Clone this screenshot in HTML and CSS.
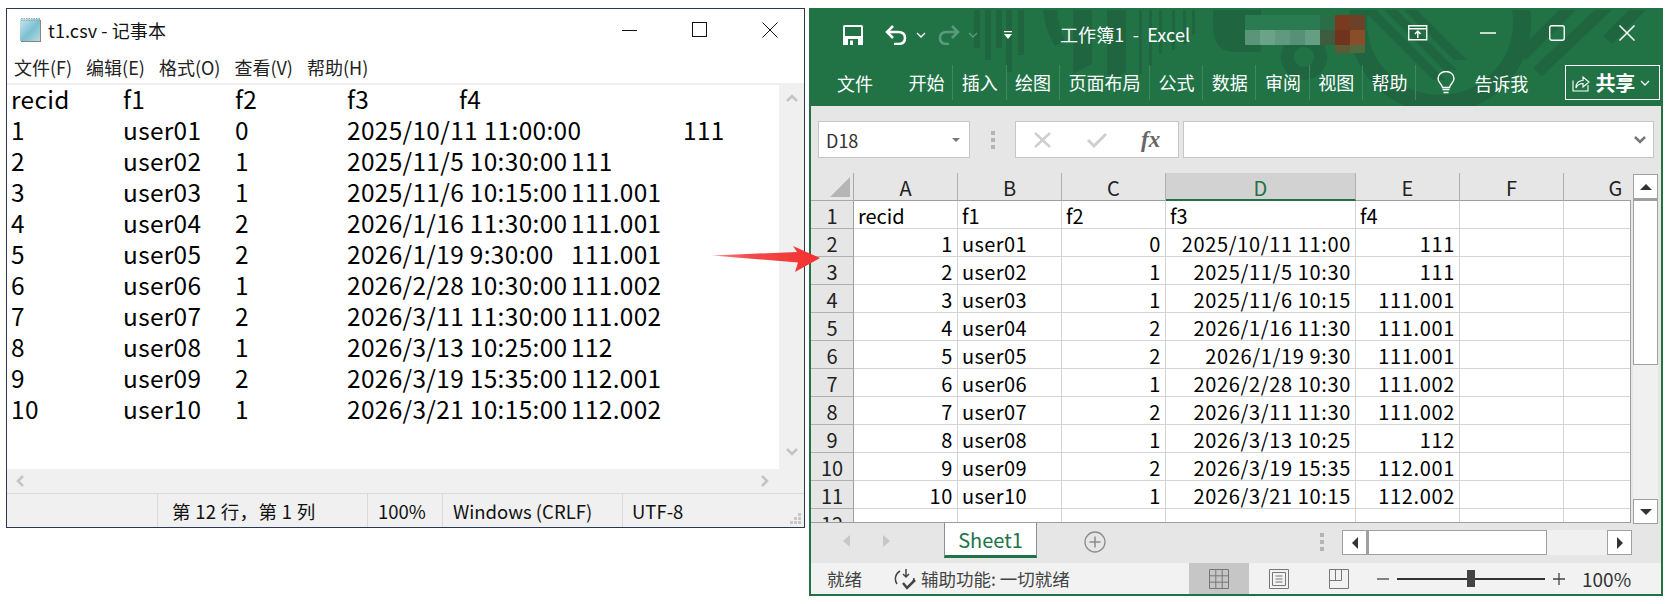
FILE: index.html
```html
<!DOCTYPE html>
<html lang="zh">
<head>
<meta charset="utf-8">
<title>t1.csv</title>
<link rel="stylesheet" href="styles.css">
</head>
<body>
<div class="stage">
  <section class="np">
    <header class="np-title">
      <svg class="np-icon" width="26" height="26" viewBox="0 0 26 26"><rect x="3" y="3" width="20" height="22" fill="#8a8672"/><rect x="2" y="2" width="20" height="22" fill="#7fc4d8"/><rect x="2" y="2" width="20" height="22" fill="url(#npg)"/><defs><linearGradient id="npg" x1="0" y1="0" x2="1" y2="1"><stop offset="0" stop-color="#c9e8f0"/><stop offset=".55" stop-color="#7cbfd3"/><stop offset="1" stop-color="#b5dbe5"/></linearGradient></defs><path d="M3 1.500h19M3 3.500h19" stroke="#9aa5aa" stroke-dasharray="1.500 1"/></svg>
      <span class="np-name">t1.csv - 记事本</span>
      <div class="np-ctrls">
        <svg width="16" height="16" viewBox="0 0 16 16"><path d="M0 8.500h15" stroke="#111"/></svg>
        <svg width="16" height="16" viewBox="0 0 16 16"><rect x=".5" y=".5" width="14" height="14" fill="none" stroke="#111"/></svg>
        <svg width="16" height="16" viewBox="0 0 16 16"><path d="M.5.500l15 15M15.500.500l-15 15" stroke="#111" fill="none"/></svg>
      </div>
    </header>
    <nav class="np-menu"><span>文件(F)</span><span>编辑(E)</span><span>格式(O)</span><span>查看(V)</span><span>帮助(H)</span></nav>
    <div class="np-main">
      <pre class="np-text">recid	f1	f2	f3	f4
1	user01	0	2025/10/11 11:00:00	111
2	user02	1	2025/11/5 10:30:00	111
3	user03	1	2025/11/6 10:15:00	111.001
4	user04	2	2026/1/16 11:30:00	111.001
5	user05	2	2026/1/19 9:30:00	111.001
6	user06	1	2026/2/28 10:30:00	111.002
7	user07	2	2026/3/11 11:30:00	111.002
8	user08	1	2026/3/13 10:25:00	112
9	user09	2	2026/3/19 15:35:00	112.001
10	user10	1	2026/3/21 10:15:00	112.002</pre>
      <div class="np-vbar">
        <svg width="12" height="8" viewBox="0 0 12 8"><path d="M1 7l5-5 5 5" fill="none" stroke="#c4c4c4" stroke-width="2.500"/></svg>
        <svg width="12" height="8" viewBox="0 0 12 8"><path d="M1 1l5 5 5-5" fill="none" stroke="#c4c4c4" stroke-width="2.500"/></svg>
      </div>
    </div>
    <div class="np-hbar">
      <svg width="8" height="12" viewBox="0 0 8 12"><path d="M7 1L2 6l5 5" fill="none" stroke="#c4c4c4" stroke-width="2.500"/></svg>
      <svg width="8" height="12" viewBox="0 0 8 12"><path d="M1 1l5 5-5 5" fill="none" stroke="#c4c4c4" stroke-width="2.500"/></svg>
    </div>
    <footer class="np-status">
      <span class="s-blank"></span>
      <span class="s-pos">第 12 行，第 1 列</span>
      <span class="s-zoom">100%</span>
      <span class="s-eol">Windows (CRLF)</span>
      <span class="s-enc">UTF-8</span>
      <svg class="s-grip" width="12" height="12" viewBox="0 0 12 12"><path d="M8 0h3v3H8zM4 4h3v3H4zM8 4h3v3H8zM0 8h3v3H0zM4 8h3v3H4zM8 8h3v3H8z" fill="#c8c8c8"/></svg>
    </footer>
  </section>

  <section class="xl">
    <svg class="xl-art" width="850" height="96" viewBox="0 2 850 96">
      <g fill="#1f6540">
        <path d="M163 2h6v38h-6zM174 2h6v50h-6zM185 2h6v38h-6zM195 2h6v62h-6zM207 2h6v45h-6zM232 2h14q2 20 8 30l-10 6q-10-16-12-36zM262 2h19v54l-19 10zM296 2h19v62l-10 6-9-4zM328 2h3v64h-3zM338 2h3v56h-3zM348 2h3v44h-3zM361 2h3v40h-3zM372 2h3v34h-3zM381 2h3v24h-3z"/>
        <path d="M402 2h48v42h-26q-22 0-22-26z"/>
        <path d="M493 26a23 23 0 1 0 .1 0zm0 13a10 10 0 1 1-.1 0z" fill-rule="evenodd"/>
        <path d="M565 2l70 70h-13l-70-70zM586 2l60 60h-13l-60-60zM606 2l50 50h-13l-50-50zM748 2h17l-50 50-9-8zM784 2h17l-70 66-9-8zM818 2h17l-34 34-9-8z"/>
      </g>
      <circle cx="629" cy="14" r="82" fill="none" stroke="#1f6540" stroke-width="18"/>
    </svg>
    <svg class="xl-blur" width="120" height="45" viewBox="0 0 120 45" shape-rendering="crispEdges">
      <rect x="0" y="0" width="75" height="15" fill="#2a7a52"/><rect x="75" y="0" width="15" height="15" fill="#2a6e48"/><rect x="90" y="0" width="15" height="15" fill="#7a3a20"/><rect x="105" y="0" width="15" height="15" fill="#6d4028"/>
      <rect x="0" y="15" width="15" height="15" fill="#5b9579"/><rect x="15" y="15" width="15" height="15" fill="#6aa387"/><rect x="30" y="15" width="15" height="15" fill="#5f9a7e"/><rect x="45" y="15" width="15" height="15" fill="#569077"/><rect x="60" y="15" width="15" height="15" fill="#659e83"/><rect x="75" y="15" width="15" height="15" fill="#3f5d3e"/><rect x="90" y="15" width="15" height="15" fill="#70331c"/><rect x="105" y="15" width="15" height="15" fill="#8a4d2a"/>
      <rect x="90" y="30" width="15" height="8" fill="#5d5a35"/><rect x="105" y="30" width="15" height="8" fill="#4f6a3c"/>
    </svg>
    <header class="xl-title">
      <div class="qat">
        <svg class="q-save" width="20" height="20" viewBox="0 0 20 20"><path d="M0 1.500Q0 0 1.500 0h17Q20 0 20 1.500V20H0z" fill="#fff"/><path d="M2 2h16v9H2z" fill="#217346"/><path d="M5 14h10v6H5z" fill="#217346"/><path d="M7 15.500h3V20H7z" fill="#fff"/></svg>
        <svg class="q-undo" width="22" height="20" viewBox="0 0 22 20"><path d="M8 1L2 7l6 6M2 7h11q7 0 7 6t-7 6H9" fill="none" stroke="#fff" stroke-width="2.500"/></svg>
        <svg class="q-chev" width="10" height="6" viewBox="0 0 10 6"><path d="M1 1l4 4 4-4" fill="none" stroke="#fff" stroke-width="1.300"/></svg>
        <svg class="q-redo" width="22" height="20" viewBox="0 0 22 20"><path d="M14 1l6 6-6 6M20 7H9q-7 0-7 6t7 6h2" fill="none" stroke="#5c9a7c" stroke-width="2.500"/></svg>
        <svg class="q-chev2" width="10" height="6" viewBox="0 0 10 6"><path d="M1 1l4 4 4-4" fill="none" stroke="#5c9a7c" stroke-width="1.300"/></svg>
        <svg class="q-cust" width="8" height="10" viewBox="0 0 8 10"><path d="M0 1h8v1.200H0zM0 4h8L4 9z" fill="#fff"/></svg>
      </div>
      <span class="xl-name">工作簿1&nbsp; -&nbsp; Excel</span>
      <div class="xl-ctrls">
        <svg width="20" height="16" viewBox="0 0 20 16"><path d="M.75.750h18v14h-18zM.75 3.750h18" fill="none" stroke="#fff" stroke-width="1.300"/><path d="M9.750 13V7M7 9l2.750-3 2.750 3" fill="none" stroke="#fff" stroke-width="1.500"/></svg>
        <svg class="c-min" width="16" height="16" viewBox="0 0 16 16"><path d="M0 8h16" stroke="#fff" stroke-width="1.500"/></svg>
        <svg class="c-max" width="16" height="16" viewBox="0 0 16 16"><rect x=".75" y=".750" width="14.500" height="14.500" rx="2" fill="none" stroke="#fff" stroke-width="1.400"/></svg>
        <svg class="c-close" width="16" height="16" viewBox="0 0 16 16"><path d="M.5.500l15 15M15.500.500l-15 15" stroke="#fff" stroke-width="1.500"/></svg>
      </div>
    </header>
    <nav class="ribbon">
      <span class="r-file">文件</span>
      <span class="r-tab">开始</span>
      <span class="r-tab">插入</span>
      <span class="r-tab">绘图</span>
      <span class="r-tab">页面布局</span>
      <span class="r-tab">公式</span>
      <span class="r-tab">数据</span>
      <span class="r-tab">审阅</span>
      <span class="r-tab">视图</span>
      <span class="r-tab">帮助</span>
      <svg class="r-bulb" width="18" height="24" viewBox="0 0 18 24"><path d="M5.500 16.500C5 13 1 11.500 1 7.500a8 7 0 0 1 16 0c0 4-4 5.500-4.500 9z" fill="none" stroke="#fff" stroke-width="1.400"/><path d="M5.500 18.500h7M6.500 21.500h5" stroke="#fff" stroke-width="1.500"/></svg>
      <span class="r-tell">告诉我</span>
      <div class="r-share">
        <svg width="18" height="18" viewBox="0 0 18 18"><path d="M1 6.500V17h15v-6M4 14c0-5 3-7.500 7-7.500V3l6 5-6 5V9.500c-3 0-5.500 1-7 4.500z" fill="none" stroke="#fff" stroke-width="1.100"/></svg>
        <b>共享</b>
        <svg width="10" height="6" viewBox="0 0 10 6"><path d="M1 1l4 4 4-4" fill="none" stroke="#fff" stroke-width="1.300"/></svg>
      </div>
    </nav>
    <div class="fbar">
      <div class="namebox"><span>D18</span><i class="nb-arrow"></i></div>
      <div class="f-dots"><i></i><i></i><i></i></div>
      <div class="f-btns">
        <svg width="17" height="16" viewBox="0 0 17 16"><path d="M1 1l15 14M16 1L1 15" stroke="#cfcfcf" stroke-width="2.500"/></svg>
        <svg width="20" height="16" viewBox="0 0 20 16"><path d="M1 8l6 6L19 2" fill="none" stroke="#cfcfcf" stroke-width="3"/></svg>
        <span class="fx">fx</span>
      </div>
      <div class="f-input"><svg width="12" height="8" viewBox="0 0 12 8"><path d="M1 1l5 5 5-5" fill="none" stroke="#777" stroke-width="2.500"/></svg></div>
    </div>
    <div class="sheet-area">
      <div class="sheet-wrap">
        <div class="sheet">
          <div class="corner"><svg width="20" height="20" viewBox="0 0 20 20"><path d="M20 0v20H0z" fill="#b5b5b5"/></svg></div>
          <div class="ch">A</div><div class="ch">B</div><div class="ch">C</div><div class="ch sel">D</div><div class="ch">E</div><div class="ch">F</div><div class="ch">G</div>

          <div class="rh">1</div><div class="c">recid</div><div class="c">f1</div><div class="c">f2</div><div class="c">f3</div><div class="c">f4</div><div class="c"></div><div class="c"></div>
          <div class="rh">2</div><div class="c n">1</div><div class="c u">user01</div><div class="c n">0</div><div class="c n">2025/10/11 11:00</div><div class="c n">111</div><div class="c"></div><div class="c"></div>
          <div class="rh">3</div><div class="c n">2</div><div class="c u">user02</div><div class="c n">1</div><div class="c n">2025/11/5 10:30</div><div class="c n">111</div><div class="c"></div><div class="c"></div>
          <div class="rh">4</div><div class="c n">3</div><div class="c u">user03</div><div class="c n">1</div><div class="c n">2025/11/6 10:15</div><div class="c n">111.001</div><div class="c"></div><div class="c"></div>
          <div class="rh">5</div><div class="c n">4</div><div class="c u">user04</div><div class="c n">2</div><div class="c n">2026/1/16 11:30</div><div class="c n">111.001</div><div class="c"></div><div class="c"></div>
          <div class="rh">6</div><div class="c n">5</div><div class="c u">user05</div><div class="c n">2</div><div class="c n">2026/1/19 9:30</div><div class="c n">111.001</div><div class="c"></div><div class="c"></div>
          <div class="rh">7</div><div class="c n">6</div><div class="c u">user06</div><div class="c n">1</div><div class="c n">2026/2/28 10:30</div><div class="c n">111.002</div><div class="c"></div><div class="c"></div>
          <div class="rh">8</div><div class="c n">7</div><div class="c u">user07</div><div class="c n">2</div><div class="c n">2026/3/11 11:30</div><div class="c n">111.002</div><div class="c"></div><div class="c"></div>
          <div class="rh">9</div><div class="c n">8</div><div class="c u">user08</div><div class="c n">1</div><div class="c n">2026/3/13 10:25</div><div class="c n">112</div><div class="c"></div><div class="c"></div>
          <div class="rh">10</div><div class="c n">9</div><div class="c u">user09</div><div class="c n">2</div><div class="c n">2026/3/19 15:35</div><div class="c n">112.001</div><div class="c"></div><div class="c"></div>
          <div class="rh">11</div><div class="c n">10</div><div class="c u">user10</div><div class="c n">1</div><div class="c n">2026/3/21 10:15</div><div class="c n">112.002</div><div class="c"></div><div class="c"></div>
          <div class="rh">12</div><div class="c"></div><div class="c"></div><div class="c"></div><div class="c"></div><div class="c"></div><div class="c"></div><div class="c"></div>
        </div>
      </div>
      <div class="vscroll">
        <div class="sb-btn"><i class="tri up"></i></div>
        <div class="v-thumb"></div>
        <div class="v-track"></div>
        <div class="sb-btn"><i class="tri down"></i></div>
      </div>
    </div>
    <div class="tabs">
      <div class="tab-nav">
        <svg width="7" height="12" viewBox="0 0 7 12"><path d="M7 0v12L0 6z" fill="#c6c6c6"/></svg>
        <svg width="7" height="12" viewBox="0 0 7 12"><path d="M0 0v12l7-6z" fill="#c6c6c6"/></svg>
      </div>
      <div class="tab">Sheet1</div>
      <svg class="tab-add" width="22" height="22" viewBox="0 0 22 22"><circle cx="11" cy="11" r="10" fill="none" stroke="#8c8c8c" stroke-width="1.300"/><path d="M5.500 11h11M11 5.500v11" stroke="#8c8c8c" stroke-width="1.500"/></svg>
      <div class="tab-dots"><i></i><i></i><i></i></div>
      <div class="hscroll">
        <div class="hb"><i class="tri left"></i></div>
        <div class="h-thumb"></div>
        <div class="h-track"></div>
        <div class="hb"><i class="tri right"></i></div>
      </div>
    </div>
    <footer class="xl-status">
      <span class="st-ready">就绪</span>
      <svg class="st-acc" width="24" height="22" viewBox="0 0 24 22"><path d="M6 3a9 9 0 0 0-3 13M12 1v7M9 6l3 3 3-3M20 10a9 9 0 0 1-1 3" fill="none" stroke="#444" stroke-width="1.500"/><path d="M9 15l4 5 8-8" fill="none" stroke="#444" stroke-width="2.500"/></svg>
      <span class="st-text">辅助功能: 一切就绪</span>
      <div class="st-view active"><svg width="20" height="20" viewBox="0 0 20 20"><path d="M.5.500h19v19H.5zM.5 6.800h19M.5 13.200h19M6.800.500v19M13.200.500v19" fill="none" stroke="#777"/></svg></div>
      <div class="st-view"><svg width="20" height="20" viewBox="0 0 20 20"><path d="M.5.500h19v19H.5zM3.500 3.500h13v13h-13zM6.500 7h7M6.500 10h7M6.500 13h7" fill="none" stroke="#777"/></svg></div>
      <div class="st-view"><svg width="20" height="20" viewBox="0 0 20 20"><path d="M.5.500h19v19H.5zM6.500.500v11M12.500.500v11M.5 11.500h12" fill="none" stroke="#777"/></svg></div>
      <div class="zoomer">
        <svg width="12" height="2" viewBox="0 0 12 2"><path d="M0 1h12" stroke="#444" stroke-width="1.300"/></svg>
        <div class="slider"><i></i></div>
        <svg width="12" height="12" viewBox="0 0 12 12"><path d="M0 6h12M6 0v12" stroke="#444" stroke-width="1.300"/></svg>
        <span class="st-pct">100%</span>
      </div>
    </footer>
  </section>
</div>
<svg class="arrow" width="110" height="30" viewBox="0 0 110 30"><defs><linearGradient id="ag" x1="0" y1="0" x2="1" y2="0"><stop offset="0" stop-color="#f98a8a"/><stop offset=".35" stop-color="#f24a4a"/><stop offset="1" stop-color="#f42f2f"/></linearGradient></defs><path d="M0 9.500L85 6 81 0l27 12-25 14 3-9.500z" fill="url(#ag)"/></svg>
</body>
</html>
```
FILE: styles.css
```css
* { box-sizing: border-box; }
html, body { margin: 0; padding: 0; background: #fff; }
body {
  width: 1668px;
  height: 604px;
  overflow: hidden;
  position: relative;
  font-family: "Noto Sans CJK SC", "Noto Sans", sans-serif;
  color: #111;
}
i { display: block; font-style: normal; }
svg { display: block; flex: none; }
.stage { display: flex; align-items: flex-start; gap: 4px; padding: 8px 0 0 6px; }

/* Notepad */
.np {
  width: 799px;
  height: 520px;
  border: 1px solid #2a3853;
  display: flex;
  flex-direction: column;
  background: #fff;
}
.np-title { height: 41px; display: flex; align-items: center; padding-left: 11px; font-size: 18px; }
.np-icon { margin-right: 4px; }
.np-name { line-height: 24px; letter-spacing: .1px; }
.np-ctrls { margin-left: auto; display: flex; gap: 54px; padding-right: 26px; }
.np-menu { height: 31px; display: flex; gap: 14px; padding: 2px 0 0 7px; font-size: 18px; align-items: center; color: #222; }
.np-main { flex: 1; display: flex; margin-top: 2px; border-top: 2px solid #f0f0f0; min-height: 0; }
.np-text {
  flex: 1;
  margin: -2px 0 0;
  padding: 0 0 0 4px;
  font-family: inherit;
  font-size: 24.400px;
  letter-spacing: .35px;
  line-height: 31px;
  tab-size: 112px;
  white-space: pre;
  color: #000;
}
.np-vbar { width: 25px; background: #f0f0f0; display: flex; flex-direction: column; justify-content: space-between; align-items: center; padding: 9px 0 13px; }
.np-hbar { height: 25px; background: #f0f0f0; display: flex; justify-content: space-between; align-items: center; padding: 0 35px 0 9px; border-bottom: 1px solid #d9d9d9; }
.np-status { height: 33px; background: #f0f0f0; display: flex; align-items: center; font-size: 18.500px; position: relative; color: #111; }
.np-status span { height: 100%; display: flex; align-items: center; border-right: 1px solid #d9d9d9; padding-left: 14px; white-space: pre; }
.s-blank { width: 151px; }
.s-pos { width: 210px; letter-spacing: .3px; }
.s-zoom { width: 75px; padding-left: 10px !important; }
.s-eol { width: 180px; padding-left: 10px !important; }
.s-enc { border-right: 0 !important; padding-left: 9px !important; }
.s-grip { position: absolute; right: 2px; bottom: 2px; }

/* Excel */
.xl {
  width: 854px;
  height: 588px;
  position: relative;
  background: #e6e6e6;
  border: solid #217346;
  border-width: 0 2px 2px;
  display: flex;
  flex-direction: column;
}
.xl-art { position: absolute; left: 0; top: 2px; }
.xl-blur { position: absolute; left: 434px; top: 7px; }
.xl-title, .ribbon, .fbar, .sheet-area, .tabs, .xl-status { position: relative; }
.xl-title { height: 55px; padding-bottom: 2px; display: flex; align-items: center; color: #fff; }
.xl::before { content: ""; position: absolute; left: -2px; right: -2px; top: 0; height: 98px; background: #217346; }
.xl-art, .xl-blur { z-index: 1; }
.xl-title, .ribbon { z-index: 2; }
.qat { width: 249px; display: flex; align-items: center; padding-left: 32px; }
.q-undo { margin-left: 22px; }
.q-chev { margin-left: 9px; }
.q-redo { margin-left: 12px; }
.q-chev2 { margin-left: 8px; }
.q-cust { margin-left: 26px; }
.xl-name { font-size: 18px; line-height: 24px; letter-spacing: .1px; margin-bottom: 2px; }
.xl-ctrls { position: absolute; right: 0; top: 17px; display: flex; align-items: center; }
.xl-ctrls svg:first-child { margin-right: 52px; }
.c-min { margin-right: 53px; }
.c-max { margin-right: 54px; }
.c-close { margin-right: 26px; }
.ribbon { height: 43px; padding-bottom: 4px; display: flex; align-items: center; color: #fff; font-size: 18px; }
.r-file { width: 89px; padding-left: 26px; }
.r-tab { height: 35px; padding: 0 8.500px; line-height: 35px; border-right: 1px solid #3e8762; width: 53.300px; white-space: nowrap; }
.r-tab:nth-of-type(5) { width: 90px; }
.r-bulb { margin-left: 21px; }
.r-tell { margin-left: 19px; }
.r-share { margin-left: 37px; width: 95px; height: 35px; border: 1px solid #fff; display: flex; align-items: center; padding-left: 6px; gap: 5px; }
.r-share b { font-size: 20px; font-weight: 700; }

.fbar { height: 67px; display: flex; padding: 15px 0 15px 7px; align-items: stretch; }
.namebox { width: 152px; background: #fff; border: 1px solid #c6c6c6; display: flex; align-items: center; justify-content: space-between; padding: 0 9px 0 7px; font-size: 18px; color: #333; }
.nb-arrow { width: 0; height: 0; border: solid transparent; border-width: 4px 4px 0; border-top-color: #777; }
.f-dots { width: 45px; display: flex; flex-direction: column; gap: 3px; align-items: center; justify-content: center; }
.f-dots i, .tab-dots i { width: 4px; height: 4px; background: #b4b4b4; }
.f-btns { width: 164px; background: #fff; border: 1px solid #c6c6c6; display: flex; align-items: center; gap: 36px; padding-left: 18px; }
.fx { font-family: "Liberation Serif", serif; font-style: italic; font-weight: 700; font-size: 23px; color: #666; margin-left: -2px; }
.f-input { margin-left: 4px; width: 471px; background: #fff; border: 1px solid #c6c6c6; display: flex; align-items: center; justify-content: flex-end; padding-right: 7px; }

.sheet-area { height: 350px; display: flex; }
.sheet-wrap { width: 820px; height: 350px; overflow: hidden; position: relative; border-bottom: 1px solid #9e9e9e; }
.sheet-wrap::after { content: ""; position: absolute; right: 0; top: 27px; bottom: 0; width: 1px; background: #9e9e9e; }
.sheet {
  display: grid;
  grid-template-columns: 43px 104px 104px 104px 190px 104px 104px 104px;
  grid-auto-rows: 28px;
  width: 853px;
  font-size: 20px;
  line-height: 27px;
}
.corner { background: #e6e6e6; border-right: 1px solid #a8a8a8; border-bottom: 1px solid #a8a8a8; display: flex; align-items: flex-end; justify-content: flex-end; padding: 0 3px 3px 0; }
.ch { text-align: center; background: #e6e6e6; border-right: 1px solid #b0b0b0; border-bottom: 1px solid #9e9e9e; color: #222; padding-top: 1px; }
.ch.sel { background: #d2d2d2; color: #217346; border-bottom: 2px solid #217346; }
.rh { text-align: center; background: #e6e6e6; border-right: 1px solid #9e9e9e; border-bottom: 1px solid #b0b0b0; color: #222; padding-top: 1px; }
.c { background: #fff; border-right: 1px solid #d4d4d4; border-bottom: 1px solid #d4d4d4; padding: 1px 4px 0; white-space: nowrap; color: #000; }
.c.n { text-align: right; letter-spacing: .65px; }
.c.u { letter-spacing: .4px; }
.vscroll { width: 25px; margin-left: 2px; height: 352px; display: flex; flex-direction: column; margin-top: 1px; }
.sb-btn { height: 25px; background: #fff; border: 1px solid #a0a0a0; display: flex; align-items: center; justify-content: center; flex: none; }
.v-thumb { height: 166px; background: #fff; border: 1px solid #a0a0a0; border-top-width: 2px; flex: none; }
.v-track { flex: 1; background: #f0f0f0; }
.vscroll .sb-btn:last-child { margin-bottom: 2px; }
.tri { width: 0; height: 0; border: solid transparent; }
.tri.up { border-width: 0 6px 6px; border-bottom-color: #333; }
.tri.down { border-width: 6px 6px 0; border-top-color: #333; }
.tri.left { border-width: 6px 6px 6px 0; border-right-color: #333; }
.tri.right { border-width: 6px 0 6px 6px; border-left-color: #333; }

.tabs { height: 39px; display: flex; align-items: flex-start; }
.tab-nav { width: 133px; height: 35px; display: flex; align-items: center; gap: 33px; padding-left: 32px; }
.tab { width: 93px; height: 35px; background: #fff; border: solid #8f8f8f; border-width: 0 1px; border-bottom: 3px solid #217346; color: #217346; text-align: center; font-size: 20px; line-height: 34px; }
.tab-add { margin: 8px 0 0 47px; }
.tab-dots { margin: 10px 0 0 214px; display: flex; flex-direction: column; gap: 3px; }
.hscroll { margin: 7px 0 0 18px; width: 290px; height: 25px; display: flex; }
.hb { width: 25px; background: #fff; border: 1px solid #a0a0a0; display: flex; align-items: center; justify-content: center; }
.h-thumb { width: 180px; background: #fff; border: 1px solid #a0a0a0; border-left-width: 2px; }
.h-track { flex: 1; background: #f0f0f0; }

.xl-status { height: 32px; background: #f2f2f2; display: flex; align-items: center; font-size: 17px; color: #444; border-top: 1px solid #e6e6e6; }
.st-ready { margin-left: 16px; width: 67px; font-size: 17.500px; }
.st-acc { margin-right: 3px; }
.st-text { width: 268px; font-size: 17.500px; white-space: nowrap; }
.st-view { width: 60px; height: 100%; display: flex; align-items: center; justify-content: center; }
.st-view.active { background: #c6c6c6; }
.zoomer { display: flex; align-items: center; margin-left: 8px; }
.slider { width: 148px; height: 2px; background: #333; margin: 0 8px; position: relative; }
.slider i { position: absolute; left: 70px; top: -8px; width: 8px; height: 17px; background: #444; }
.st-pct { margin-left: 17px; font-size: 19px; color: #333; }

.arrow { position: absolute; left: 712px; top: 246px; }
```
